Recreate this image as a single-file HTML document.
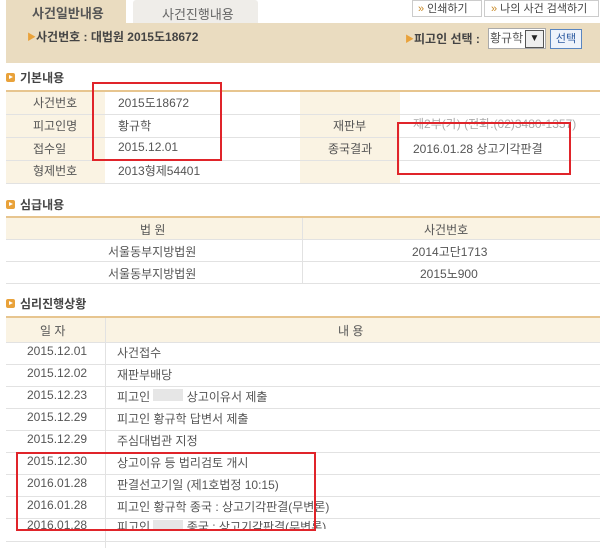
<!DOCTYPE html>
<html><head><meta charset="utf-8"><style>
body{margin:0;width:600px;height:555px;background:#fff;font-family:"Liberation Sans","Noto Sans CJK KR","NanumGothic",sans-serif;font-size:12px;color:#555;position:relative;overflow:hidden}
.a{position:absolute}
.t{position:absolute;white-space:nowrap}
.hl{position:absolute;height:1px;background:#e2e2e2}
.ob{position:absolute;height:2px;background:#e7c58f}
.ic{position:absolute;width:9px;height:9px;background:#e9a23a;border-radius:2px}
.ic:after{content:"";position:absolute;left:3px;top:2px;border-left:4px solid #fff;border-top:2.5px solid transparent;border-bottom:2.5px solid transparent}
.sec{position:absolute;font-weight:bold;color:#444;font-size:12px}
.red{position:absolute;border:2px solid #e0242a}
.lbl{position:absolute;background:#faf3e3}
</style></head><body>
<div class="a" style="left:6px;top:0;width:120px;height:23px;background:#eadcc0"></div>
<div class="a" style="left:133px;top:0;width:125px;height:23px;background:#efede9;border-radius:3px 3px 0 0"></div>
<div class="t" style="left:32px;top:3px;font-size:13px;color:#555;font-weight:bold">사건일반내용</div>
<div class="t" style="left:162px;top:4px;font-size:13px;color:#666">사건진행내용</div>
<div class="a" style="left:412px;top:0;width:68px;height:15px;border:1px solid #ccc;background:#fff"></div>
<div class="t" style="left:418px;top:0;font-size:11px;color:#444"><span style="color:#c88a2a">»</span> 인쇄하기</div>
<div class="a" style="left:484px;top:0;width:113px;height:15px;border:1px solid #ccc;background:#fff"></div>
<div class="t" style="left:491px;top:0;font-size:11px;color:#444"><span style="color:#c88a2a">»</span> 나의 사건 검색하기</div>
<div class="a" style="left:6px;top:23px;width:594px;height:40px;background:#eadcc0"></div>
<div class="t" style="left:27px;top:30px;color:#e9a23a;font-size:9px">▶</div>
<div class="t" style="left:36px;top:28px;font-weight:bold;color:#444;font-size:12px">사건번호 : 대법원 2015도18672</div>
<div class="t" style="left:405px;top:32px;color:#e9a23a;font-size:9px">▶</div>
<div class="t" style="left:414px;top:30px;font-weight:bold;color:#444">피고인 선택 :</div>
<div class="a" style="left:488px;top:28px;width:56px;height:19px;background:#fff;border:1px solid #aaa"></div>
<div class="t" style="left:490px;top:29px;color:#555">황규학</div>
<div class="a" style="left:525px;top:30px;width:17px;height:16px;border:1px solid #555;background:#eee;text-align:center;font-size:10px;line-height:16px;color:#222">▼</div>
<div class="a" style="left:550px;top:29px;width:30px;height:18px;border:1px solid #5a86c0;background:#eef3fb;color:#2c5aa0;font-size:11px;text-align:center;line-height:18px">선택</div>

<div class="ic" style="left:6px;top:73px"></div><div class="sec" style="left:20px;top:69px">기본내용</div>
<div class="ob" style="left:6px;top:90px;width:594px"></div>
<div class="lbl" style="left:6px;top:92px;width:99px;height:92px"></div>
<div class="lbl" style="left:300px;top:92px;width:100px;height:92px"></div>
<div class="hl" style="left:6px;top:114px;width:594px"></div>
<div class="hl" style="left:6px;top:137px;width:594px"></div>
<div class="hl" style="left:6px;top:160px;width:594px"></div>
<div class="hl" style="left:6px;top:183px;width:594px"></div>
<div class="t" style="left:33px;top:94px">사건번호</div><div class="t" style="left:118px;top:94px">2015도18672</div>
<div class="t" style="left:33px;top:117px">피고인명</div><div class="t" style="left:118px;top:117px">황규학</div>
<div class="t" style="left:33px;top:140px">접수일</div><div class="t" style="left:118px;top:140px">2015.12.01</div>
<div class="t" style="left:33px;top:162px">형제번호</div><div class="t" style="left:118px;top:162px">2013형제54401</div>
<div class="t" style="left:333px;top:117px">재판부</div><div class="t" style="left:413px;top:115px;color:#aaa">제2부(가) (전화:(02)3480-1357)</div>
<div class="t" style="left:328px;top:140px">종국결과</div><div class="t" style="left:413px;top:140px">2016.01.28 상고기각판결</div>
<div class="red" style="left:92px;top:82px;width:126px;height:75px"></div>
<div class="red" style="left:397px;top:122px;width:170px;height:49px"></div>

<div class="ic" style="left:6px;top:200px"></div><div class="sec" style="left:20px;top:196px">심급내용</div>
<div class="ob" style="left:6px;top:216px;width:594px"></div>
<div class="lbl" style="left:6px;top:218px;width:594px;height:21px"></div>
<div class="a" style="left:302px;top:218px;width:1px;height:65px;background:#e2e2e2"></div>
<div class="hl" style="left:6px;top:239px;width:594px"></div>
<div class="hl" style="left:6px;top:261px;width:594px"></div>
<div class="hl" style="left:6px;top:283px;width:594px"></div>
<div class="t" style="left:140px;top:221px">법 원</div><div class="t" style="left:424px;top:221px">사건번호</div>
<div class="t" style="left:108px;top:243px">서울동부지방법원</div><div class="t" style="left:412px;top:243px">2014고단1713</div>
<div class="t" style="left:108px;top:265px">서울동부지방법원</div><div class="t" style="left:420px;top:265px">2015노900</div>

<div class="ic" style="left:6px;top:299px"></div><div class="sec" style="left:20px;top:295px">심리진행상황</div>
<div class="ob" style="left:6px;top:316px;width:594px"></div>
<div class="lbl" style="left:6px;top:318px;width:594px;height:24px"></div>
<div class="a" style="left:105px;top:318px;width:1px;height:230px;background:#e2e2e2"></div>
<div class="t" style="left:40px;top:322px">일 자</div><div class="t" style="left:338px;top:322px">내 용</div>
<div class="hl" style="left:6px;top:342px;width:594px"></div>
<div class="hl" style="left:6px;top:364px;width:594px"></div>
<div class="hl" style="left:6px;top:386px;width:594px"></div>
<div class="hl" style="left:6px;top:408px;width:594px"></div>
<div class="hl" style="left:6px;top:430px;width:594px"></div>
<div class="hl" style="left:6px;top:452px;width:594px"></div>
<div class="hl" style="left:6px;top:474px;width:594px"></div>
<div class="hl" style="left:6px;top:496px;width:594px"></div>
<div class="hl" style="left:6px;top:518px;width:594px"></div>
<div class="hl" style="left:6px;top:541px;width:594px"></div>
<div class="t" style="left:27px;top:344px">2015.12.01</div><div class="t" style="left:117px;top:344px">사건접수</div>
<div class="t" style="left:27px;top:366px">2015.12.02</div><div class="t" style="left:117px;top:366px">재판부배당</div>
<div class="t" style="left:27px;top:388px">2015.12.23</div><div class="t" style="left:117px;top:388px">피고인 <span style="display:inline-block;width:30px;height:12px;background:#e6e6e6"></span> 상고이유서 제출</div>
<div class="t" style="left:27px;top:410px">2015.12.29</div><div class="t" style="left:117px;top:410px">피고인 황규학 답변서 제출</div>
<div class="t" style="left:27px;top:432px">2015.12.29</div><div class="t" style="left:117px;top:432px">주심대법관 지정</div>
<div class="t" style="left:27px;top:454px">2015.12.30</div><div class="t" style="left:117px;top:454px">상고이유 등 법리검토 개시</div>
<div class="t" style="left:27px;top:476px">2016.01.28</div><div class="t" style="left:117px;top:476px">판결선고기일 (제1호법정 10:15)</div>
<div class="t" style="left:27px;top:498px">2016.01.28</div><div class="t" style="left:117px;top:498px">피고인 황규학 종국 : 상고기각판결(무변론)</div>
<div class="a" style="left:6px;top:520px;width:594px;height:9px;overflow:hidden"><div class="t" style="left:21px;top:-2px">2016.01.28</div><div class="t" style="left:111px;top:-2px">피고인 <span style="display:inline-block;width:30px;height:12px;background:#e6e6e6"></span> 종국 : 상고기각판결(무변론)</div></div>
<div class="red" style="left:16px;top:452px;width:296px;height:75px"></div>
</body></html>
